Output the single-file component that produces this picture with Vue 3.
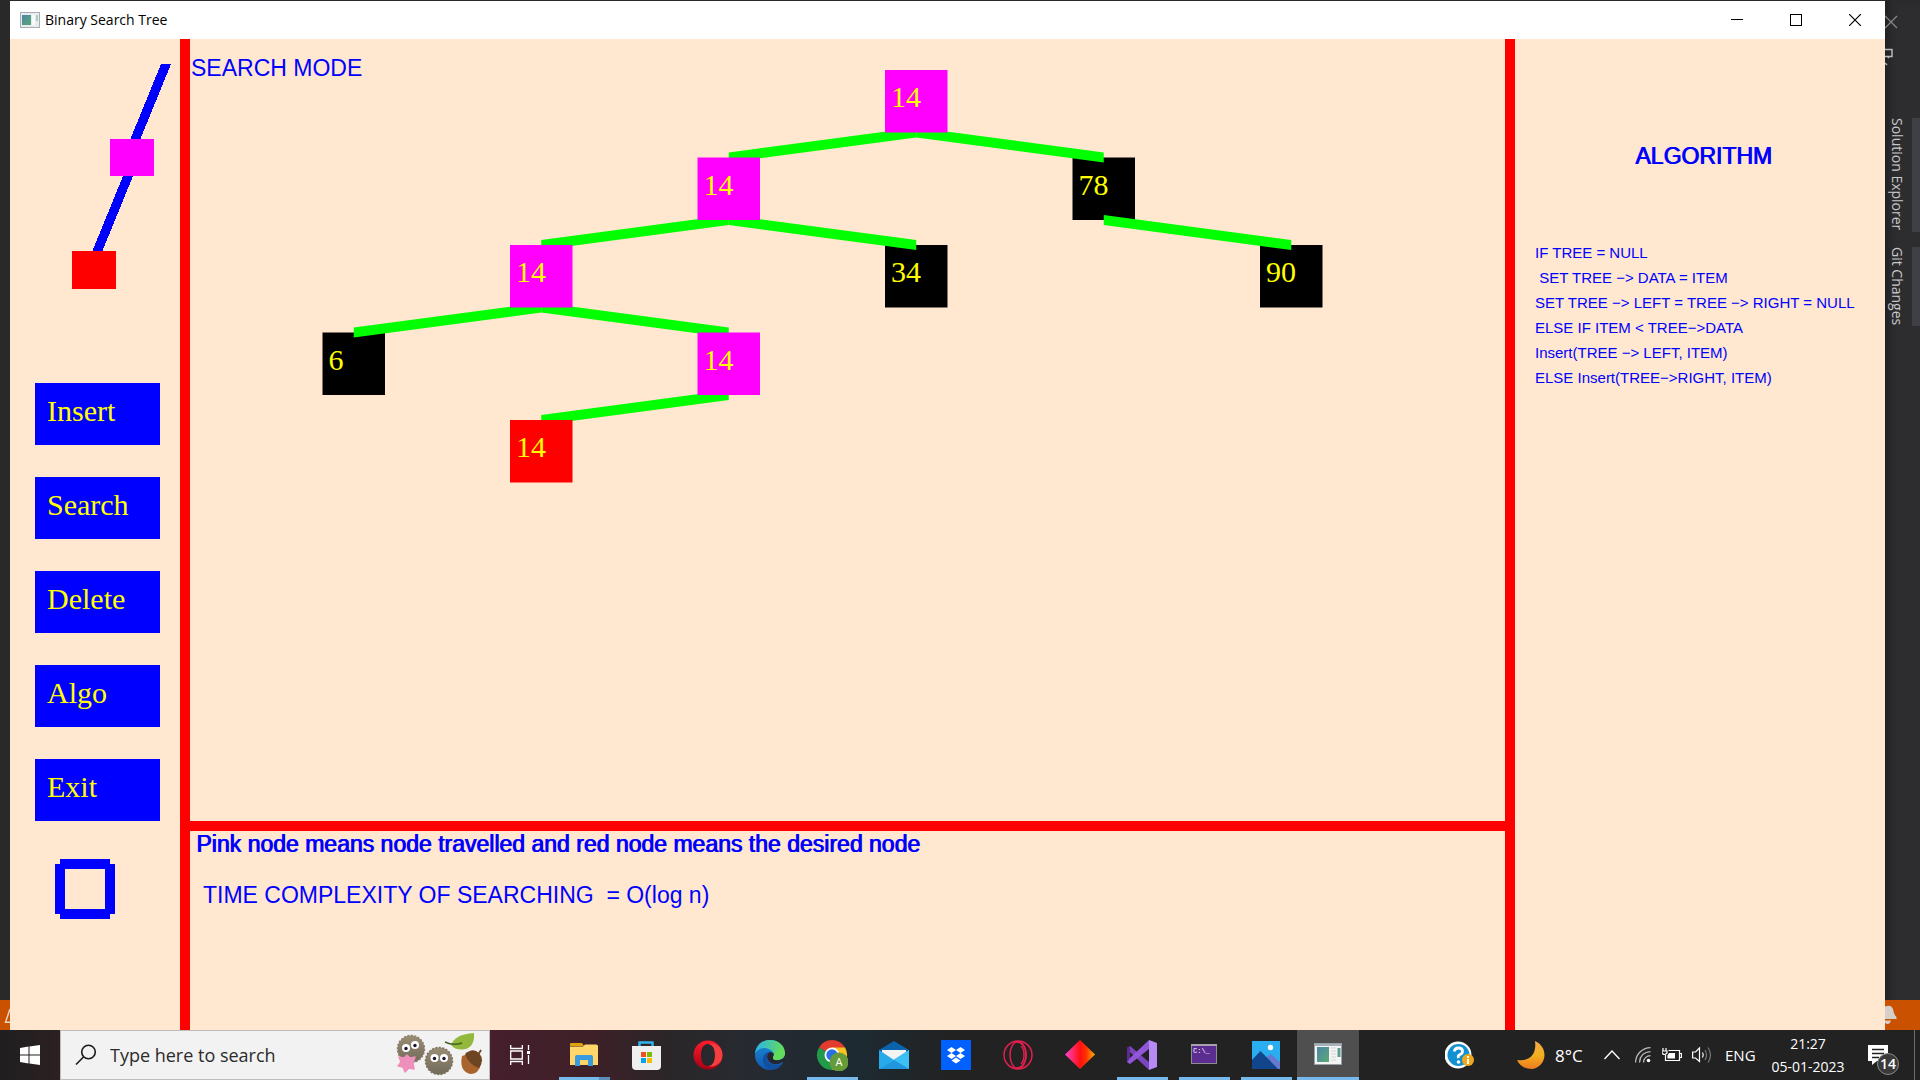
<script setup>
const actions = ['Insert', 'Search', 'Delete', 'Algo', 'Exit']
const complexity = 'TIME COMPLEXITY OF SEARCHING  = O(log n)'

const algorithm = [
  'IF TREE = NULL',
  ' SET TREE −> DATA = ITEM',
  'SET TREE −> LEFT = TREE −> RIGHT = NULL',
  'ELSE IF ITEM < TREE−>DATA',
  'Insert(TREE −> LEFT, ITEM)',
  'ELSE Insert(TREE−>RIGHT, ITEM)',
]

// Tree layout: columns and rows of a fixed grid on the canvas
const COL = 187.5
const ROW = 87.5
const SIZE = 62.5
const place = (n) => ({ ...n, x: 132.5 + n.col * COL, y: 31 + n.row * ROW })
const nodes = [
  { id: 'root', value: 14, col: 3, row: 0, state: 'visited' },
  { id: 'l', value: 14, col: 2, row: 1, state: 'visited' },
  { id: 'r', value: 78, col: 4, row: 1, state: 'idle' },
  { id: 'll', value: 14, col: 1, row: 2, state: 'visited' },
  { id: 'lr', value: 34, col: 3, row: 2, state: 'idle' },
  { id: 'rr', value: 90, col: 5, row: 2, state: 'idle' },
  { id: 'lll', value: 6, col: 0, row: 3, state: 'idle' },
  { id: 'llr', value: 14, col: 2, row: 3, state: 'visited' },
  { id: 'llrl', value: 14, col: 1, row: 4, state: 'found' },
].map(place)

const byId = Object.fromEntries(nodes.map((n) => [n.id, n]))
const edges = [
  ['root', 'l'], ['root', 'r'], ['l', 'll'], ['l', 'lr'],
  ['r', 'rr'], ['ll', 'lll'], ['ll', 'llr'], ['llr', 'llrl'],
].map(([a, b]) => {
  const x1 = byId[a].x + SIZE / 2
  const y1 = byId[a].y + SIZE
  const x2 = byId[b].x + SIZE / 2
  const y2 = byId[b].y
  return `${x1},${y1 - 5} ${x2},${y2 - 5} ${x2},${y2 + 5} ${x1},${y1 + 5}`
})
const idle = nodes.filter((n) => n.state === 'idle')
const marked = nodes.filter((n) => n.state !== 'idle')
</script>

<template>
  <div class="screen">
    <div class="desktop">
      <aside class="edge edge-left">
        <div class="edge-status">
          <svg width="10" height="30" viewBox="0 0 10 30" fill="none" stroke="#e8d8cc" stroke-width="1.4"><path d="M10 9 L5.500 22.300 H10" /></svg>
        </div>
      </aside>

      <main class="window">
        <header class="titlebar">
          <svg class="app-icon" width="20" height="16" viewBox="0 0 20 16">
            <rect x=".5" y=".5" width="19" height="15" fill="#e9ecef" stroke="#a9adb2" />
            <rect x="2" y="3" width="9" height="10" fill="url(#appg)" />
            <rect x="12" y="3" width="3" height="10" fill="#fafafa" />
            <rect x="16" y="3" width="2" height="6" fill="#a9cfc0" />
            <defs><linearGradient id="appg" x1="0" y1="0" x2="1" y2="1"><stop offset="0" stop-color="#4d86a8" /><stop offset="1" stop-color="#5aa873" /></linearGradient></defs>
          </svg>
          <h1>Binary Search Tree</h1>
          <div class="controls">
            <button aria-label="Minimize"><svg width="12" height="12" viewBox="0 0 12 12"><path d="M0 5.500H12" stroke="#000" /></svg></button>
            <button aria-label="Maximize"><svg width="12" height="12" viewBox="0 0 12 12"><rect x=".5" y=".5" width="11" height="11" fill="none" stroke="#000" /></svg></button>
            <button aria-label="Close"><svg width="12" height="12" viewBox="0 0 12 12"><path d="M0 0L12 12M12 0L0 12" stroke="#000" stroke-width="1.200" /></svg></button>
          </div>
        </header>

        <div class="body">
          <nav class="sidebar">
            <svg class="legend" width="170" height="260" viewBox="0 0 170 260" shape-rendering="crispEdges">
              <polygon points="151,25 161,25 130,101 120,101" fill="#00f" />
              <polygon points="113,137 123,137 92,213 82,213" fill="#00f" />
              <rect x="100" y="100" width="44" height="37" fill="#f0f" />
              <rect x="62" y="212" width="44" height="38" fill="#f00" />
            </svg>
            <div class="actions">
              <button v-for="a in actions" :key="a">{{ a }}</button>
            </div>
            <svg class="box" width="60" height="60" viewBox="0 0 60 60" shape-rendering="crispEdges">
              <path fill="#00f" fill-rule="evenodd" d="M5 0H55V5H60V55H55V60H5V55H0V5H5ZM10 10V50H50V10Z" />
            </svg>
          </nav>

          <section class="center">
            <div class="canvas">
              <h2>SEARCH MODE</h2>
              <svg class="tree" viewBox="0 0 1315 782" preserveAspectRatio="xMinYMin meet">
                <rect v-for="n in idle" :key="n.id" :x="n.x" :y="n.y" :width="SIZE" :height="SIZE" fill="#000" />
                <polygon v-for="(e, i) in edges" :key="i" :points="e" fill="#0f0" />
                <rect v-for="n in marked" :key="n.id" :x="n.x" :y="n.y" :width="SIZE" :height="SIZE" :fill="n.state === 'found' ? '#f00' : '#f0f'" />
                <text v-for="n in nodes" :key="n.id" :x="n.x + 6" :y="n.y + 37">{{ n.value }}</text>
              </svg>
            </div>
            <footer class="notes">
              <p class="heavy">Pink node means node travelled and red node means the desired node</p>
              <p class="complexity">{{ complexity }}</p>
            </footer>
          </section>

          <section class="algorithm">
            <h2>ALGORITHM</h2>
            <p v-for="line in algorithm" :key="line">{{ line }}</p>
          </section>
        </div>
      </main>

      <aside class="edge edge-right">
        <svg class="edge-icons" width="14" height="60" viewBox="0 0 14 60" fill="none">
          <path d="M0 5L12 17M12 5L0 17" stroke="#8a8a8c" stroke-width="1.200" />
          <path d="M0 38.500H7V45.500H0M2 45L4 47M0 52L2 54" stroke="#b8b8ba" stroke-width="1.500" />
        </svg>
        <div class="tab tab-tall">Solution Explorer</div>
        <div class="tab tab-short">Git Changes</div>
        <div class="edge-status">
          <svg width="14" height="30" viewBox="0 0 14 30" fill="#d6d0cb"><path d="M0 6.500Q6 4 8 9Q9 15 11.500 17V19H0ZM0 20.500H6Q5 24 2.500 24Q0 24 0 22Z" /></svg>
        </div>
      </aside>
    </div>

    <footer class="taskbar">
      <button class="start" aria-label="Start">
        <svg width="20" height="20" viewBox="0 0 20 20" fill="#fff"><path d="M0 3L8.500 1.600V9.500H0ZM9.500 1.400L20 0V9.500H9.500ZM0 10.500H8.500V18.400L0 17ZM9.500 10.500H20V20L9.500 18.600Z" /></svg>
      </button>
      <label class="search">
        <svg width="22" height="22" viewBox="0 0 22 22" fill="none" stroke="#1a1a1a" stroke-width="1.600"><circle cx="13.500" cy="8" r="6.800" /><path d="M8.500 13L1 20.500" /></svg>
        <input type="text" placeholder="Type here to search" aria-label="Type here to search" />
        <svg class="doodle" width="88" height="44" viewBox="0 0 88 44">
          <defs><linearGradient id="soot" x1="0" y1="0" x2="0" y2="1"><stop offset="0" stop-color="#9a8e74" /><stop offset="1" stop-color="#716a5b" /></linearGradient></defs>
          <circle cx="16" cy="16" r="13.500" fill="url(#soot)" stroke="#8b806a" stroke-width="1.500" stroke-dasharray="2 1.500" />
          <circle cx="44" cy="28" r="13.500" fill="url(#soot)" stroke="#7d7460" stroke-width="1.500" stroke-dasharray="2 1.500" />
          <g fill="#fff"><circle cx="11" cy="15" r="4" /><circle cx="20" cy="12" r="4" /><circle cx="39.500" cy="25" r="4" /><circle cx="49" cy="25" r="4" /></g>
          <g fill="#1b1230"><circle cx="11" cy="15.500" r="1.700" /><circle cx="20" cy="12.500" r="1.700" /><circle cx="39.500" cy="25.500" r="1.700" /><circle cx="49" cy="25.500" r="1.700" /></g>
          <path d="M12 22L15 25L20 24L18 30L19 36L14 35L10 39L8 34L3 33L6 29L4 24L9 25Z" fill="#ee90bb" stroke="#ee90bb" stroke-width="1.500" stroke-linejoin="round" />
          <path d="M56 12Q60 1 79 0Q80 15 68 16.500Q60 17 56 12Z" fill="#92b83c" /><path d="M50 9Q58 13 67 10" fill="none" stroke="#44611f" stroke-width="1.500" />
          <path d="M67 23Q64 38 75 41Q84 41 86 31L76 20Z" fill="#a9632c" /><path d="M70 21Q78 14 84 20Q90 27 84 35Q74 32 70 21Z" fill="#6d4522" /><path d="M83 22L86 17" stroke="#6d4522" stroke-width="1.800" />
        </svg>
      </label>

      <button class="slot first" aria-label="Task View">
        <svg width="20" height="20" viewBox="0 0 20 20" fill="none" stroke="#fff" stroke-width="1.300"><path d="M.7 0V3.500H12.300V0M.7 20V16.500H12.300V20M.7 6H12.300V14H.7ZM18.500 0V5M18.500 10V19" /><path d="M17 6h3v3h-3z" fill="#fff" stroke="none" /></svg>
      </button>
      <button class="slot run" aria-label="File Explorer">
        <svg width="30" height="30" viewBox="0 0 30 30"><path d="M1 4Q1 3 2 3H13L15 6H1Z" fill="#e2a106" /><path d="M1 6.500H14L16 4.500H27Q29 4.500 29 6V25H1Z" fill="#ffd667" /><path d="M6 26V17Q6 15 8 15H22Q24 15 24 17V26H19V20H11V26Z" fill="#3a9ae0" /></svg>
        <i class="more"></i>
      </button>
      <button class="slot" aria-label="Microsoft Store">
        <svg width="30" height="30" viewBox="0 0 30 30"><path d="M8.500 8V2.500H21.500V8" fill="none" stroke="#30b4ee" stroke-width="2" /><path d="M1 6H30V26Q30 30 26 30H5Q1 30 1 26Z" fill="#efefef" /><path d="M8.500 6V2.500H21.500V6" fill="none" stroke="#30b4ee" stroke-width="2" /><path d="M10 12h5v5h-5z" fill="#f25022" /><path d="M16 12h5v5h-5z" fill="#7fba00" /><path d="M10 18h5v5h-5z" fill="#00a4ef" /><path d="M16 18h5v5h-5z" fill="#ffb900" /></svg>
      </button>
      <button class="slot" aria-label="Opera">
        <svg width="30" height="30" viewBox="0 0 30 30"><defs><linearGradient id="opera" x1="0" y1="0" x2="0" y2="1"><stop offset="0" stop-color="#ff1b2d" /><stop offset="1" stop-color="#a70014" /></linearGradient></defs><path fill="url(#opera)" fill-rule="evenodd" d="M15 .5a14.500 14.500 0 1 0 0 29a14.500 14.500 0 1 0 0-29M15 4C20 4 22 9 22 15S20 26 15 26S8 21 8 15S10 4 15 4" /><path d="M15 4C19 2 29.500 5 29.500 15S19 28 15 26C20 26 22 21 22 15S20 4 15 4" fill="#f3403f" /></svg>
      </button>
      <button class="slot" aria-label="Microsoft Edge">
        <svg width="30" height="30" viewBox="0 0 30 30"><defs><linearGradient id="edge1"><stop offset="0" stop-color="#2bb3ec" /><stop offset="1" stop-color="#65dd55" /></linearGradient><linearGradient id="edge2" x1="0" y1="0" x2="0" y2="1"><stop offset="0" stop-color="#1b8fd8" /><stop offset="1" stop-color="#1156b0" /></linearGradient></defs><circle cx="15" cy="15" r="15" fill="url(#edge2)" /><path d="M0 14C1 4 8 0 15 0C24 0 30 6 30 13C30 18 26 20 22 20C18 20 17 18 19 15C18 10 13 8 9 8C5 8 1 11 0 14Z" fill="url(#edge1)" /><path d="M12 16C11 22 16 27 27 24C22 33 8 31 8 19C8 15 11 12 15 12C13 13 12 14 12 16Z" fill="#124f9d" /><path d="M30 13C30 19 24 21 20 20C17 19 18 17 19 15C19 13 17 12 15 12C11 14 11 20 16 23Q21 26 28 22L31 22V14Z" fill="#252630" /><path d="M30 13C30 18 26 20 22 20C18 20 17 18 19 15C21 8 27 7 30 13Z" fill="#61dc5e" /></svg>
      </button>
      <button class="slot run" aria-label="Google Chrome">
        <svg width="32" height="32" viewBox="-1 -1 32 32"><path d="M15 15L2 7.500A15 15 0 0 1 28 7.500Z" fill="#e33b2e" /><path d="M15 15L2 7.500A15 15 0 0 0 15 30L21 19Z" fill="#229a4a" /><path d="M15 7.500H28A15 15 0 0 1 15 30L22 17Z" fill="#fcc31e" /><circle cx="15" cy="15" r="7.500" fill="#fff" /><circle cx="15" cy="15" r="5.700" fill="#2c6fe4" /><circle cx="22" cy="22" r="9.500" fill="#659c39" /><text x="22" y="26" text-anchor="middle" font-size="11" fill="#fff">A</text></svg>
      </button>
      <button class="slot" aria-label="Mail">
        <svg width="30" height="30" viewBox="0 0 30 30"><path d="M0 10L15 1L30 10V15H0Z" fill="#0b62ad" /><path d="M3 10H27V20H3Z" fill="#f4f4f4" /><path d="M0 10L15 20L30 10V29H0Z" fill="#27a9ea" /><path d="M0 29L30 10V29Z" fill="#3cc0f5" /><path d="M15 20L30 29H0Z" fill="#2097dd" /></svg>
      </button>
      <button class="slot" aria-label="Dropbox">
        <svg width="30" height="30" viewBox="0 0 30 30"><path d="M0 0h30v30H0z" fill="#0061fe" /><path fill="#fff" d="M10.500 7L15 10L10.500 13L6 10ZM19.500 7L24 10L19.500 13L15 10ZM10.500 13L15 16L10.500 19L6 16ZM19.500 13L24 16L19.500 19L15 16ZM15 17.500L19.500 20.500L15 23.500L10.500 20.500Z" /></svg>
      </button>
      <button class="slot" aria-label="Opera GX">
        <svg width="30" height="30" viewBox="0 0 30 30" fill="none" stroke="#e0204d" stroke-width="1.500"><circle cx="15" cy="15" r="14" /><ellipse cx="15" cy="15" rx="8" ry="13.500" /><path d="M12 2C19 1 23 7 23 15S19 28 13 28M18 6C22 9 22 20 18 24" /></svg>
      </button>
      <button class="slot" aria-label="Gitkraken">
        <svg width="30" height="30" viewBox="0 0 30 30"><defs><linearGradient id="gem"><stop offset="0" stop-color="#ff45d0" /><stop offset=".5" stop-color="#ff1010" /><stop offset=".7" stop-color="#ff3000" /><stop offset="1" stop-color="#ffb400" /></linearGradient></defs><path d="M15 0L30 14.500L15 29L0 14.500Z" fill="url(#gem)" /></svg>
      </button>
      <button class="slot run" aria-label="Visual Studio">
        <svg width="30" height="30" viewBox="0 0 30 30"><path d="M0 8L3 6L22 22V30L3 12V19L0 22Z" fill="#7b45bd" /><path d="M0 8L3 6V24L0 22Z" fill="#5c2d91" /><path d="M0 22L3 24L22 9V0L3 18Z" fill="#9256d8" /><path d="M22 0L30 3V27L22 30Z" fill="#b78af5" /></svg>
      </button>
      <button class="slot run" aria-label="Command Prompt">
        <svg width="30" height="30" viewBox="0 0 30 30"><rect x="2.500" y="4.500" width="25" height="19" fill="#5c2d91" stroke="#8d8d8d" /><path d="M2 4h26v2H2z" fill="#a7a1ad" /><text class="prompt" x="4" y="13">C:\_</text></svg>
      </button>
      <button class="slot run" aria-label="Photos">
        <svg width="30" height="30" viewBox="0 0 30 30"><path d="M1 1h28v28H1z" fill="#2aaef0" /><path d="M12 20L20 14L29 22V29H12Z" fill="#6678cf" /><path d="M1 20L9.500 11L27 29H1Z" fill="#12468c" /><circle cx="19.500" cy="7.500" r="2.700" fill="#fff" /></svg>
      </button>
      <button class="slot active" aria-label="Binary Search Tree">
        <svg width="30" height="30" viewBox="0 0 30 30"><rect x="1.500" y="3.500" width="27" height="21" fill="#f4f4f4" stroke="#98a0a6" /><path d="M2 4h26v2H2z" fill="#a5b2bb" /><rect x="4" y="7" width="12" height="15" fill="url(#appg)" /><path d="M18 8h5M18 11h5M18 14h5M18 17h5M18 20h5" stroke="#d5d5d5" /><path d="M24.500 8h3v9h-3z" fill="#5d9c8e" /></svg>
      </button>

      <div class="tray">
        <svg class="help" width="30" height="28" viewBox="0 0 30 28"><circle cx="13" cy="14" r="13.500" fill="#fff" /><circle cx="13.500" cy="14" r="11" fill="#1190d2" /><path d="M9.500 10.500Q9.500 7 13.500 7T17.500 10.500Q17.500 12.500 15 13.500T13.500 17" fill="none" stroke="#fff" stroke-width="2.800" /><circle cx="13.500" cy="21" r="1.800" fill="#fff" /><circle cx="23" cy="19" r="6" fill="#f2a71b" /><path d="M23 15v2M23 18v5" stroke="#fff" stroke-width="2" /></svg>
        <svg class="moon" width="28" height="28" viewBox="0 0 28 28"><defs><linearGradient id="moon" x1="0" y1="0" x2="0" y2="1"><stop offset="0" stop-color="#f6a84b" /><stop offset=".5" stop-color="#f2b01e" /><stop offset="1" stop-color="#ee7a21" /></linearGradient></defs><path d="M18 0C32 6 30 26 15 28C7 28 2 24 0 19C12 21 20 14 18 0Z" fill="url(#moon)" /></svg>
        <span class="temp">8°C</span>
        <svg class="chev" width="16" height="10" viewBox="0 0 16 10" fill="none" stroke="#fff" stroke-width="1.300"><path d="M.5 9L8 1L15.500 9" /></svg>
        <svg class="wifi" width="16" height="16" viewBox="0 0 16 16" fill="none" stroke="#bbb" stroke-width="1.300"><path d="M.5 15.500C1 7 7 1 15.500 .7M4.500 15.500C5 9 9 5 15.500 4.700M8.500 15.500C8.500 11.500 11.500 8.700 15.500 8.700" /><circle cx="13.500" cy="13.500" r="1.800" fill="#fff" stroke="none" /></svg>
        <svg class="battery" width="20" height="14" viewBox="0 0 20 14" fill="none" stroke="#fff" stroke-width="1.200"><path d="M6.500 2.500H17.500V12.500H3.500V7M18 5.500H19.500V9.500H18M1 0V3M4 0V3M0 3H5V5Q2.500 8 0 5Z" /><path d="M7 5h6v5.500H5.500V7.500z" fill="#fff" stroke="none" /></svg>
        <svg class="volume" width="20" height="18" viewBox="0 0 20 18" fill="none" stroke="#fff" stroke-width="1.200"><path d="M.6 6H3.500L7.500 2V15.500L3.500 12H.6ZM10.500 6.500Q12 9 10.500 11.500" /><path d="M13 4Q16 9 13 14M16 1.500Q21 9 16 16.500" stroke="#777" /></svg>
        <span class="lang">ENG</span>
        <div class="clock"><time>21:27</time><time>05-01-2023</time></div>
        <button class="notice" aria-label="Notifications">
          <svg width="20" height="20" viewBox="0 0 20 20"><path d="M0 0H20V16H9L4 20V16H0Z" fill="#fff" /><path d="M4 4.500H16M4 8.500H16M4 12.500H11" stroke="#222" stroke-width="1.300" /></svg>
          <span class="badge">14</span>
        </button>
        <i class="peek"></i>
      </div>
    </footer>
  </div>
</template>

<style>
body { margin: 0; background: #2d2d30; }
</style>

<style scoped>
* { box-sizing: border-box; }
h1, h2, p { margin: 0; font-weight: 400; }
button { border: 0; padding: 0; background: none; }
svg { display: block; flex: none; }
.screen { min-height: 100vh; display: flex; flex-direction: column; font-family: "Open Sans", "Noto Sans", sans-serif; }
.desktop { flex: 1; display: flex; padding-top: 1px; background: #2a2a2c; }

.edge { display: flex; flex-direction: column; background: #2d2d30; color: #c8c8c8; }
.edge-left { width: 10px; background: #29292a; }
.edge-right { width: 35px; box-shadow: inset 6px 0 8px -4px #1c1c1e; }
.edge-status { height: 30px; margin-top: auto; background: #ca5100; }
.edge-icons { margin: 10px 0 47px; }
.tab { display: flex; align-items: flex-start; writing-mode: vertical-rl; width: 35px; padding-right: 6px; border-right: 8px solid #3f3f46; font-size: 14px; line-height: 18px; white-space: nowrap; }
.tab-tall { height: 114px; margin-bottom: 15px; }
.tab-short { height: 79px; }

.window { flex: 1; min-width: 0; display: flex; flex-direction: column; background: #ffe8cf; }
.titlebar { height: 38px; display: flex; align-items: center; padding: 0 1px 0 10px; background: #fff; }
.titlebar h1 { margin-left: 5px; padding-bottom: 2px; font-size: 14px; color: #000; }
.controls { margin-left: auto; display: flex; height: 38px; }
.controls button { width: 59px; display: grid; place-items: center; }
.body { flex: 1; display: flex; font-family: "Liberation Sans", Arial, sans-serif; color: #00f; }

.sidebar { width: 170px; }
.legend { margin-bottom: 84px; }
.actions { display: flex; flex-direction: column; gap: 32px; padding: 0 20px 0 25px; }
.actions button { height: 62px; padding: 0 0 6px 12px; background: #00f; color: #ff0; text-align: left; font: 30px "Liberation Serif", "Times New Roman", serif; }
.box { margin: 38px 0 0 45px; }

.center { flex: 1; min-width: 0; display: flex; flex-direction: column; border: solid #f00; border-width: 0 10px; }
.canvas { flex: 1; position: relative; border-bottom: 10px solid #f00; }
.canvas h2 { padding: 15px 0 0 1px; font-size: 23px; line-height: 28px; }
.tree { position: absolute; top: 0; left: 0; width: 100%; }
.tree text { fill: #ff0; font: 30px "Liberation Serif", "Times New Roman", serif; }
.notes { height: 199px; padding: 1px 6px; font-size: 23px; white-space: pre; }
.notes p { line-height: 24px; }
.heavy { text-shadow: 1px 0 #00f; }
.notes .complexity { padding: 27px 0 0 7px; }

.algorithm { width: 370px; padding: 103px 0 0 20px; font-size: 15px; white-space: pre; }
.algorithm h2 { padding-left: 100px; margin-bottom: 70px; font-size: 23px; line-height: 28px; text-shadow: 1px 0 #00f; }
.algorithm p { line-height: 25px; }

.taskbar { height: 50px; display: flex; color: #fff; background: linear-gradient(90deg, #1f1f1f 0, #2c2022 60px, #451f2c 490px, #3e2028 590px, #2a2628 670px, #272a30 740px, #1d2a32 860px, #222 950px); }
.start { width: 60px; display: grid; place-items: center; }
.search { width: 430px; display: flex; align-items: center; padding: 0 6px 0 14px; background: #f2f2f2; border: 1px solid #bcbcbc; }
.search input { flex: 1; min-width: 0; margin-left: 13px; padding: 0; border: 0; background: none; font: 18px "Open Sans", "Noto Sans", sans-serif; }
.search input::placeholder { color: #2b2b2b; opacity: 1; }
.slot { position: relative; width: 62px; flex: none; display: grid; place-items: center; }
.slot svg { font-family: "Open Sans", sans-serif; }
.slot .prompt { fill: #fff; font: 7px "Liberation Mono", monospace; }
.slot.first { margin-right: 1px; padding-right: 2px; }
.run::after, .active::after { content: ""; position: absolute; bottom: 0; left: 6px; right: 5px; height: 3px; background: #76b9ed; }
.active::after { left: 0; right: 0; }
.active { background: #4f4f4f; }
.more { position: absolute; z-index: 1; bottom: 0; right: 5px; width: 11px; height: 3px; background: #5b8fb8; }

.tray { margin-left: auto; display: flex; align-items: center; }
.help { margin-right: 42px; }
.temp { width: 38px; margin-left: 10px; font-size: 17px; }
.chev { margin-left: 11px; margin-right: 15px; }
.wifi { margin-right: 11px; }
.battery { margin-right: 10px; }
.lang { margin-left: 13px; width: 45px; font-size: 15px; }
.clock { width: 76px; display: flex; flex-direction: column; align-items: center; font-size: 14px; line-height: 23px; white-space: nowrap; }
.notice { position: relative; margin-left: 22px; }
.badge { position: absolute; left: 9px; top: 8px; width: 22px; height: 22px; border: 1px solid #8a8a8a; border-radius: 50%; background: #3a3a3a; color: #fff; font: 600 14px/20px "Open Sans", sans-serif; text-align: center; }
.peek { width: 1px; height: 50px; margin: 0 5px 0 26px; background: #6d6d6d; }
</style>
